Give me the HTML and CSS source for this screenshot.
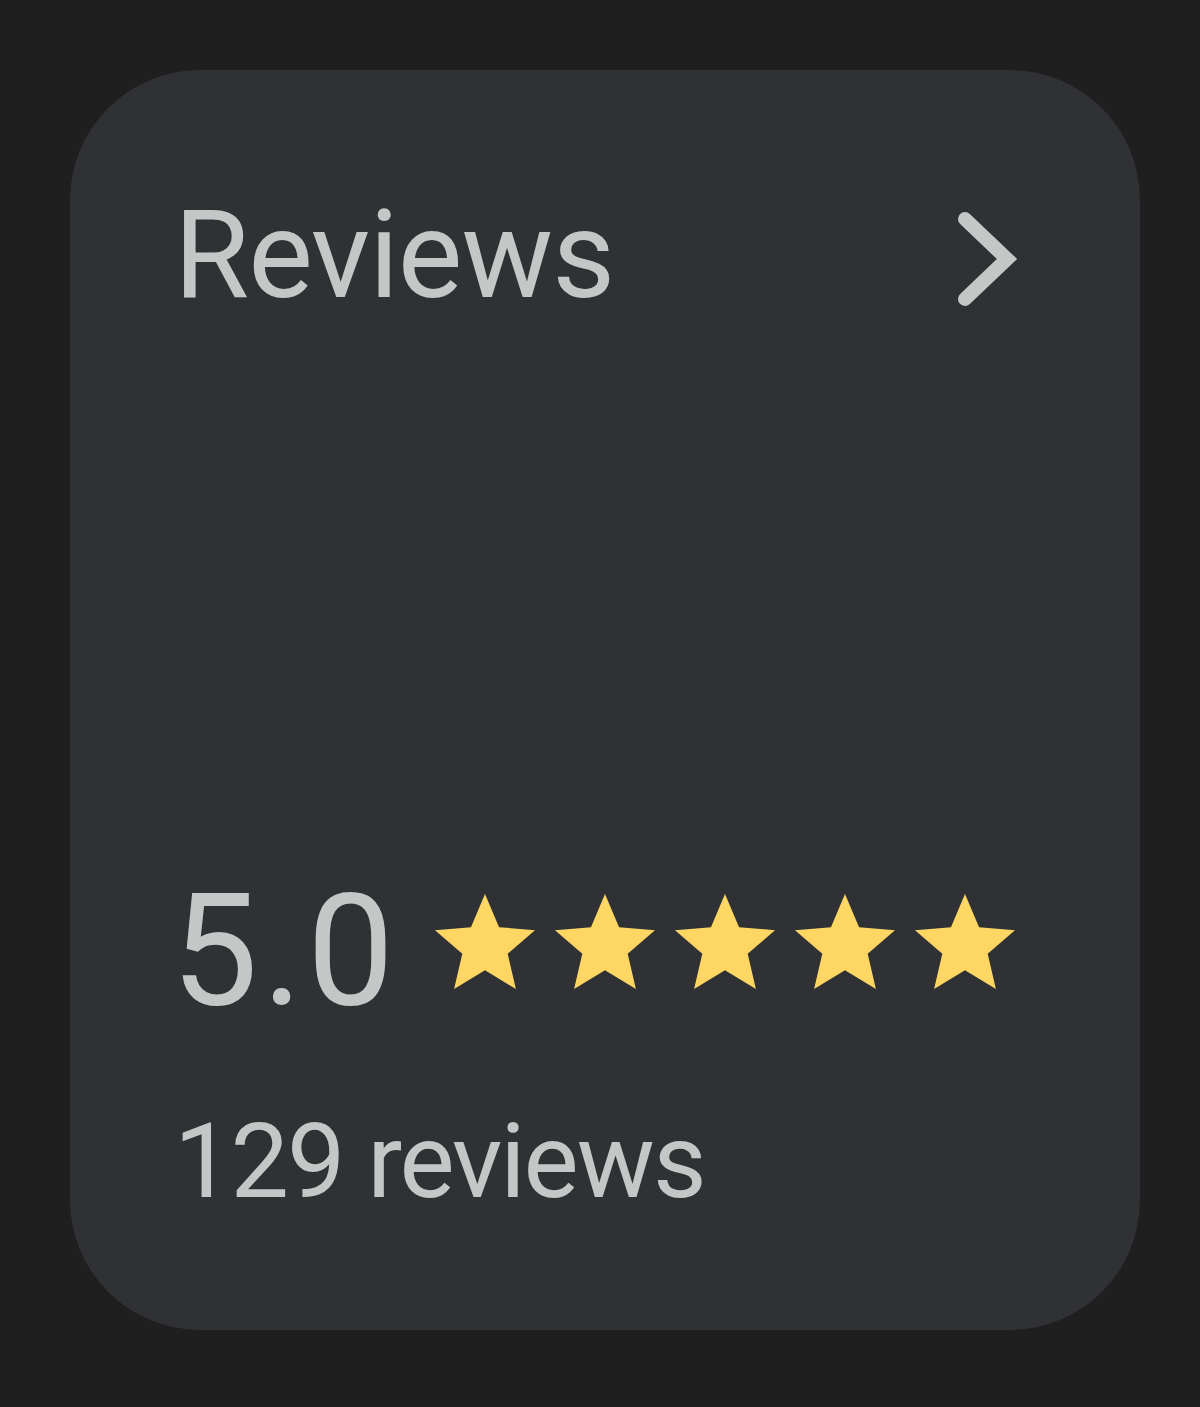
FILE: index.html
```html
<!DOCTYPE html>
<html lang="en">
<head>
    <meta charset="UTF-8">
    <meta name="viewport" content="width=device-width, initial-scale=1.0">
    <title>Reviews</title>
    <link rel="stylesheet" href="styles.css">
</head>
<body>
    <div class="card">
        <div class="card_head">
            <h2>Reviews</h2>
            <svg class="chevron" viewBox="0 0 80 120" width="80" height="120">
                <polyline points="15,23 57,63 15,103" />
            </svg>
        </div>
        <div class="card_space"></div>
        <div class="rating">
            <span class="score">5.0</span>
            <div class="stars">
                <svg viewBox="0 0 24 24" width="120" height="120"><path d="M12 17.27L18.18 21l-1.64-7.03L22 9.24l-7.19-.61L12 2 9.19 8.63 2 9.240l5.46 4.73L5.82 21z"/></svg>
                <svg viewBox="0 0 24 24" width="120" height="120"><path d="M12 17.27L18.18 21l-1.64-7.03L22 9.24l-7.19-.61L12 2 9.19 8.63 2 9.24l5.46 4.73L5.82 21z"/></svg>
                <svg viewBox="0 0 24 24" width="120" height="120"><path d="M12 17.27L18.18 21l-1.64-7.03L22 9.24l-7.19-.61L12 2 9.19 8.63 2 9.24l5.46 4.73L5.82 21z"/></svg>
                <svg viewBox="0 0 24 24" width="120" height="120"><path d="M12 17.27L18.18 21l-1.64-7.03L22 9.24l-7.19-.61L12 2 9.19 8.63 2 9.24l5.46 4.73L5.82 21z"/></svg>
                <svg viewBox="0 0 24 24" width="120" height="120"><path d="M12 17.27L18.18 21l-1.64-7.03L22 9.24l-7.19-.61L12 2 9.19 8.63 2 9.24l5.46 4.73L5.82 21z"/></svg>
            </div>
        </div>
        <p class="count">129 reviews</p>
    </div>
</body>
</html>
```

FILE: styles.css
```css
body { margin: 0; background: #1f1f1f; font-family: Roboto, "Noto Sans", sans-serif; color: #c4c7c5; }
.card { box-sizing: border-box; width: 1070px; height: 1260px; margin: 70px; background: #303134; border-radius: 130px;
    padding: 125px 110px 116px 108px; display: flex; flex-direction: column; }
.card_head { display: flex; justify-content: space-between; align-items: center; }
.card_head h2 { margin: 0 0 0 -4px; font-size: 122px; font-weight: 400; line-height: 1; letter-spacing: -1px; }
.chevron polyline { fill: none; stroke: #c4c7c5; stroke-width: 14; stroke-linecap: round; stroke-linejoin: miter; }
.card_space { flex: 1; }
.rating { display: flex; align-items: flex-start; }
.score { font-size: 155px; line-height: 1; margin: 0 27px 0 -7px; letter-spacing: 4px; }
.stars { display: flex; margin-top: 10px; }
.stars svg { display: block; fill: #fdd663; }
.count { margin: 81px 0 0 -4px; font-size: 104px; line-height: 1; letter-spacing: -2px; }
```
